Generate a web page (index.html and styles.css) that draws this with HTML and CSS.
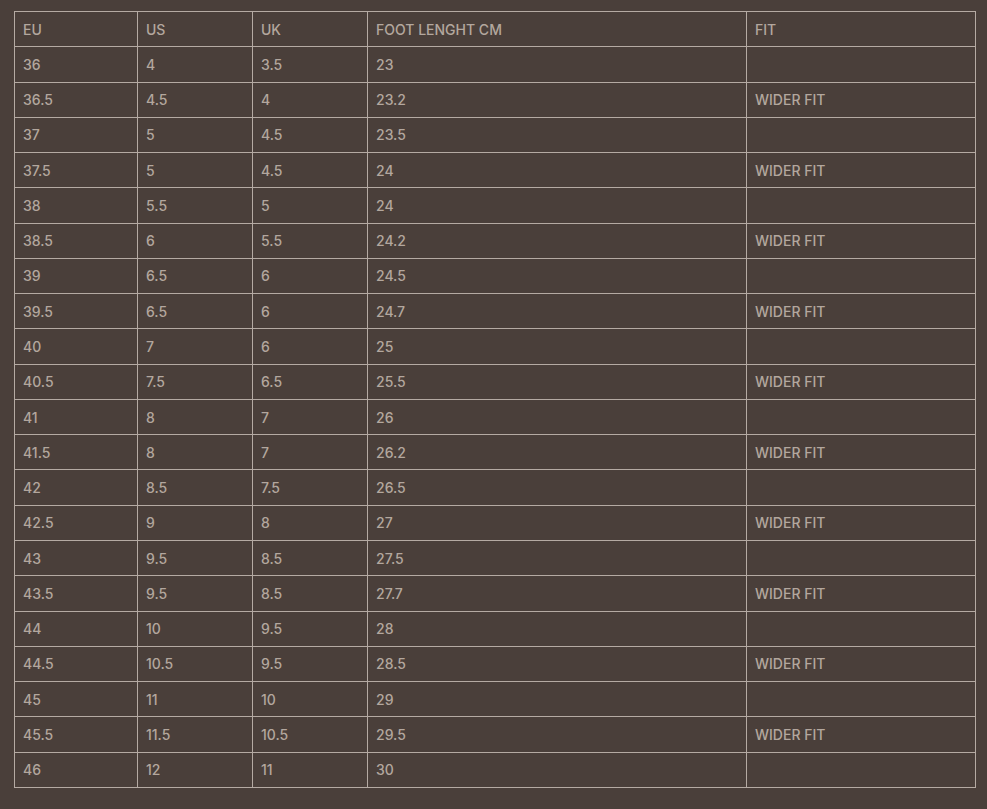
FILE: index.html
```html
<!DOCTYPE html>
<html>
<head>
<meta charset="utf-8">
<link rel="stylesheet" href="styles.css">
</head>
<body>
<table class="sizes">
<colgroup><col class="c1"><col class="c2"><col class="c3"><col class="c4"><col class="c5"></colgroup>
<tr><td>EU</td><td>US</td><td>UK</td><td>FOOT LENGHT CM</td><td>FIT</td></tr>
<tr><td>36</td><td>4</td><td>3.5</td><td>23</td><td></td></tr>
<tr><td>36.5</td><td>4.5</td><td>4</td><td>23.2</td><td>WIDER FIT</td></tr>
<tr><td>37</td><td>5</td><td>4.5</td><td>23.5</td><td></td></tr>
<tr><td>37.5</td><td>5</td><td>4.5</td><td>24</td><td>WIDER FIT</td></tr>
<tr><td>38</td><td>5.5</td><td>5</td><td>24</td><td></td></tr>
<tr><td>38.5</td><td>6</td><td>5.5</td><td>24.2</td><td>WIDER FIT</td></tr>
<tr><td>39</td><td>6.5</td><td>6</td><td>24.5</td><td></td></tr>
<tr><td>39.5</td><td>6.5</td><td>6</td><td>24.7</td><td>WIDER FIT</td></tr>
<tr><td>40</td><td>7</td><td>6</td><td>25</td><td></td></tr>
<tr><td>40.5</td><td>7.5</td><td>6.5</td><td>25.5</td><td>WIDER FIT</td></tr>
<tr><td>41</td><td>8</td><td>7</td><td>26</td><td></td></tr>
<tr><td>41.5</td><td>8</td><td>7</td><td>26.2</td><td>WIDER FIT</td></tr>
<tr><td>42</td><td>8.5</td><td>7.5</td><td>26.5</td><td></td></tr>
<tr><td>42.5</td><td>9</td><td>8</td><td>27</td><td>WIDER FIT</td></tr>
<tr><td>43</td><td>9.5</td><td>8.5</td><td>27.5</td><td></td></tr>
<tr><td>43.5</td><td>9.5</td><td>8.5</td><td>27.7</td><td>WIDER FIT</td></tr>
<tr><td>44</td><td>10</td><td>9.5</td><td>28</td><td></td></tr>
<tr><td>44.5</td><td>10.5</td><td>9.5</td><td>28.5</td><td>WIDER FIT</td></tr>
<tr><td>45</td><td>11</td><td>10</td><td>29</td><td></td></tr>
<tr><td>45.5</td><td>11.5</td><td>10.5</td><td>29.5</td><td>WIDER FIT</td></tr>
<tr><td>46</td><td>12</td><td>11</td><td>30</td><td></td></tr>
</table>
</body>
</html>
```
FILE: styles.css
```css
html, body {
  margin: 0;
  background: #4a3f3a;
}
body {
  padding: 11px 0 0 14px;
  font-family: Inter, "Liberation Sans", sans-serif;
  font-size: 14px;
  font-weight: 500;
  color: #b3a79e;
}
.sizes {
  border-collapse: collapse;
  table-layout: fixed;
  width: 961px;
}
.c1 { width: 123px; }
.c2 { width: 115px; }
.c3 { width: 115px; }
.c4 { width: 379px; }
.c5 { width: 229px; }
.sizes td {
  border: 1px solid #b5aaa3;
  height: 35.27px;
  padding: 1px 8px 0;
  box-sizing: border-box;
  vertical-align: middle;
  line-height: 16px;
}
```
